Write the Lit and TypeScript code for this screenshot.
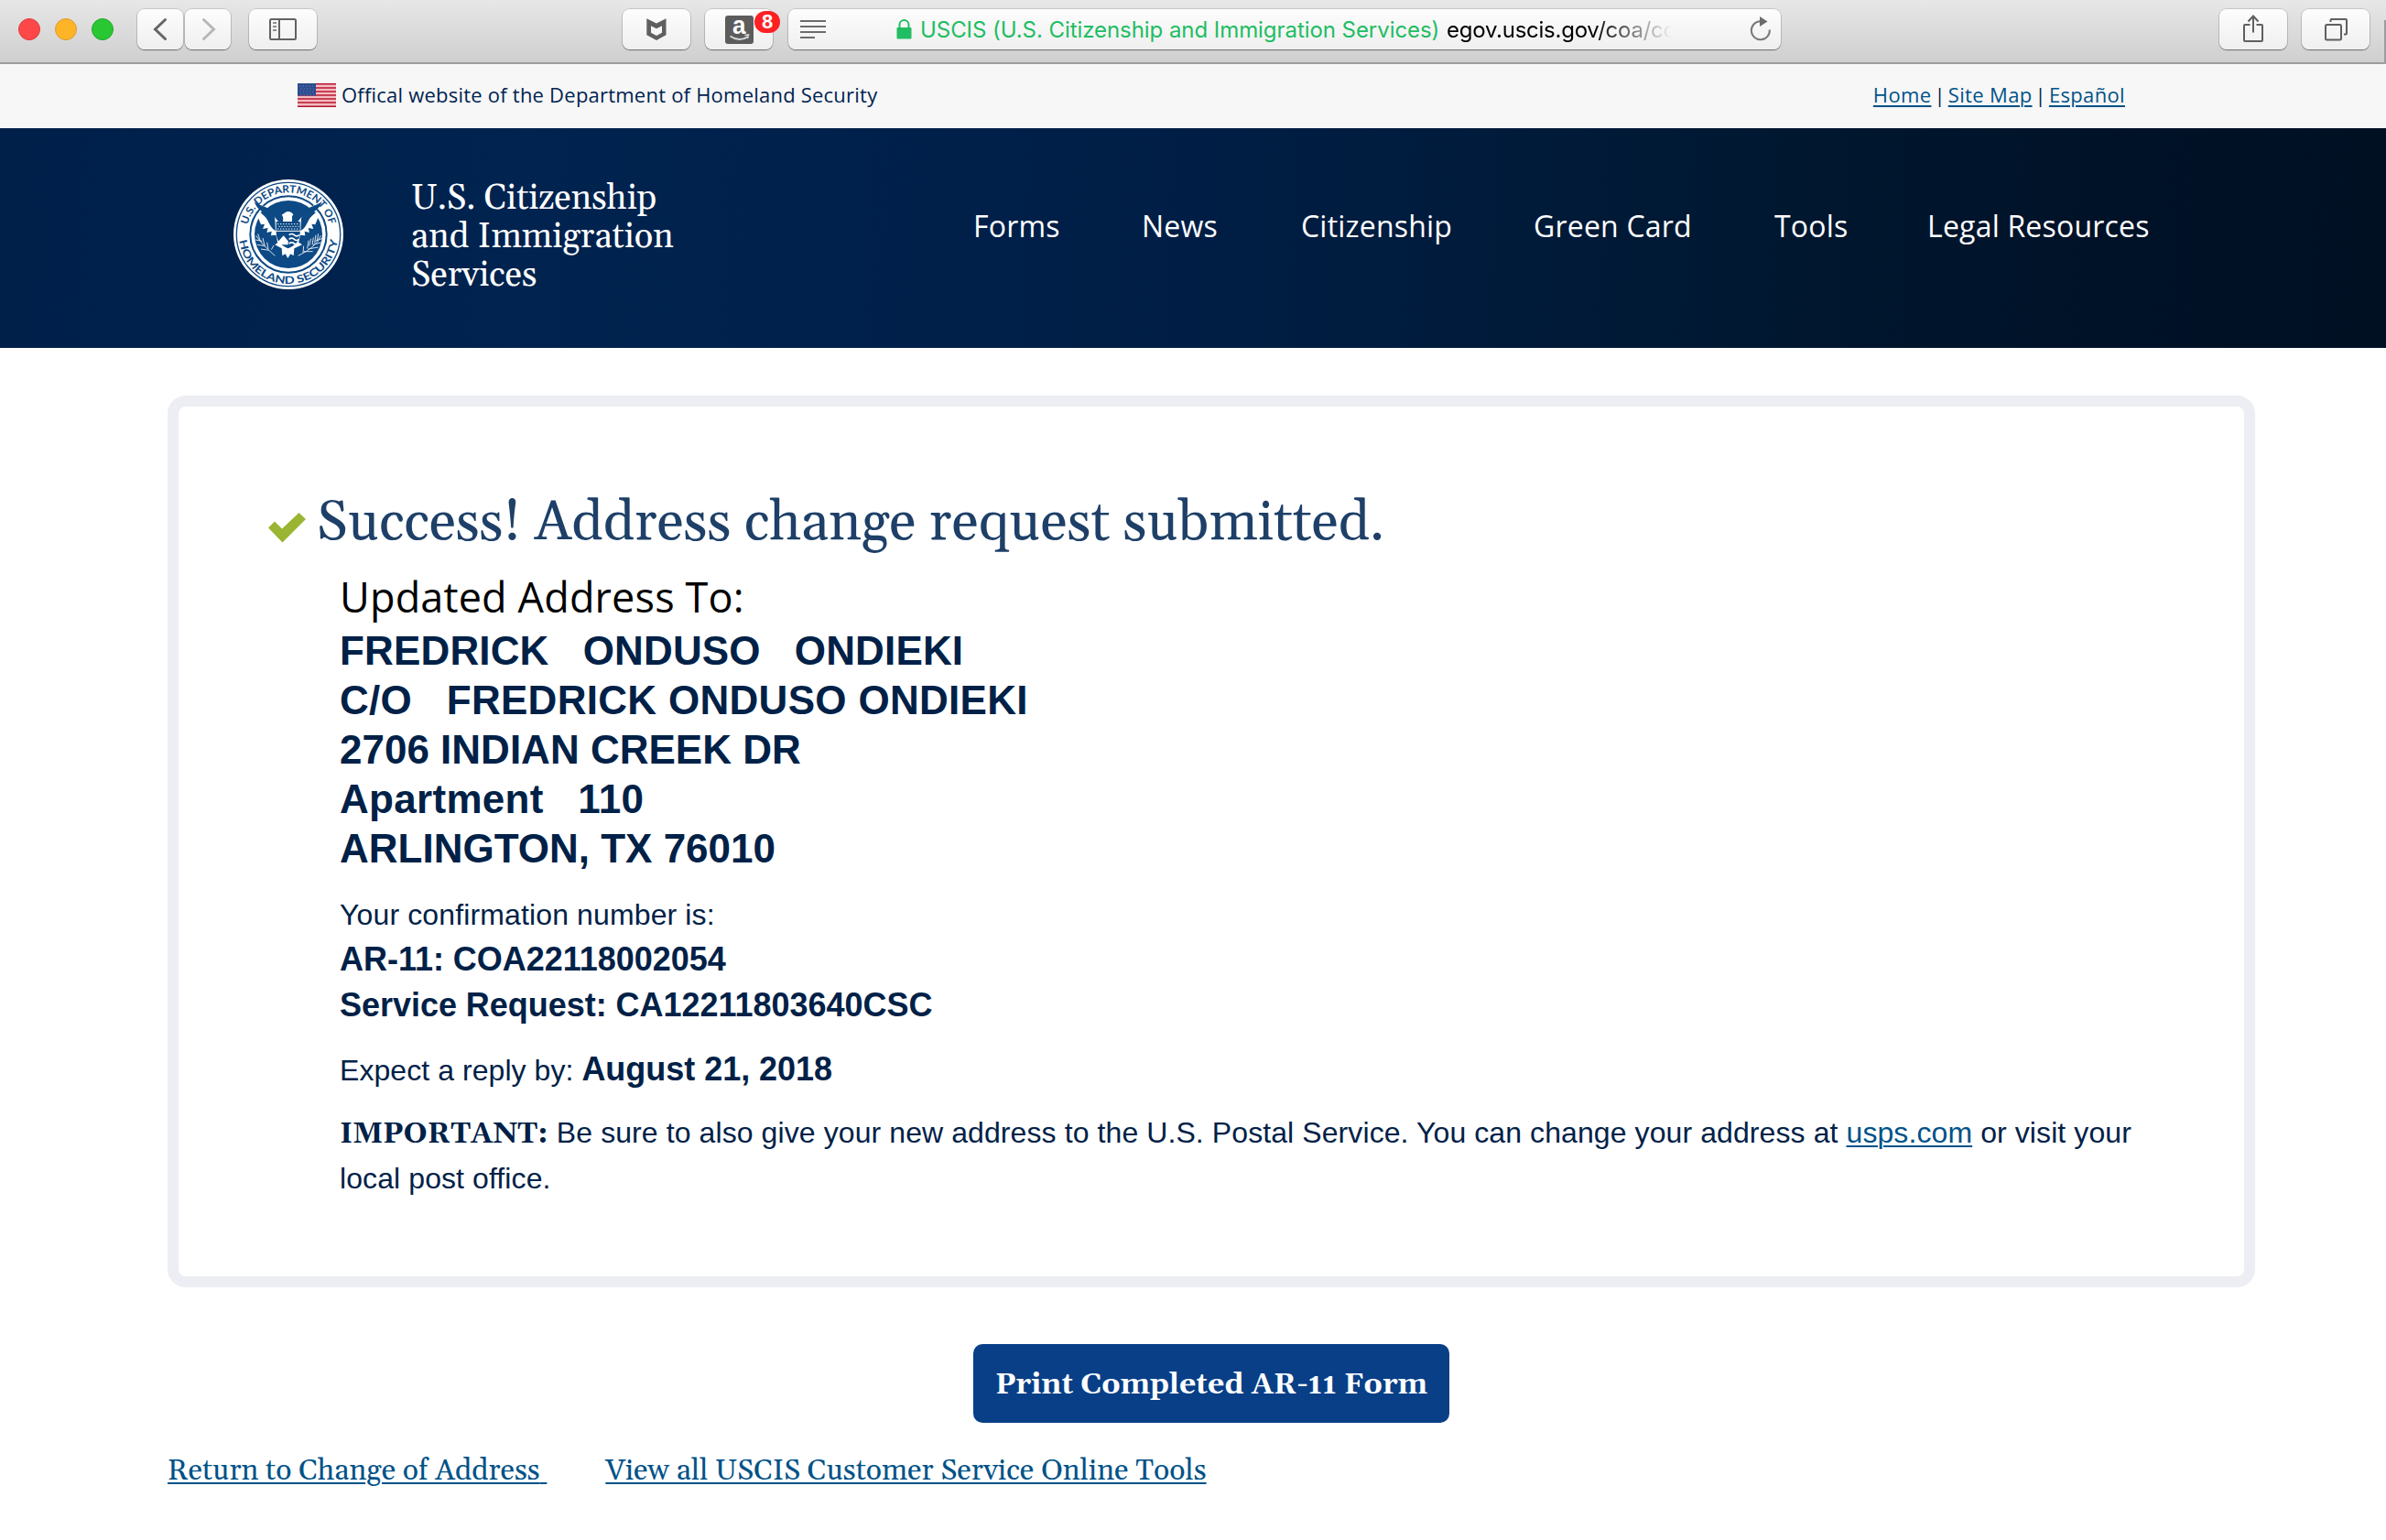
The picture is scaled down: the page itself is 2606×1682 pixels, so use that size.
import { LitElement, html, css, svg } from "lit";
import { customElement } from "lit/decorators.js";

@customElement("browser-toolbar")
class BrowserToolbar extends LitElement {
  static styles = css`
    :host { display: block; }
    .bar {
      position: relative; box-sizing: border-box; display: flex; align-items: flex-start;
      height: 70px; padding: 10px 18px 0 20px;
      background: linear-gradient(#e7e7e7, #cfcfcf); border-bottom: 2px solid #9d9d9d;
    }
    .lights { display: flex; gap: 16px; padding-top: 10px; margin-right: 26px; }
    .light { box-sizing: border-box; width: 24px; height: 24px; border-radius: 50%; border: 1px solid #e0393b; background: #fd484a; }
    .light.min { background: #fdb426; border-color: #dd9a2b; }
    .light.max { background: #29c732; border-color: #20a82b; }
    .btn {
      position: relative; display: flex; align-items: center; justify-content: center;
      height: 44px; border-radius: 8px; background: linear-gradient(#fdfdfd, #f6f6f6 50%, #efefef);
      box-shadow: 0 0 0 1px rgba(0, 0, 0, 0.13), 0 1px 1px rgba(0, 0, 0, 0.4);
    }
    .btn svg { display: block; }
    .nav { width: 50px; margin-right: 2px; }
    .side { width: 74px; margin: 0 334px 0 18px; }
    .ext { width: 74px; margin-right: 16px; }
    .url {
      flex: none; box-sizing: border-box; width: 1084px; margin-left: 1px; justify-content: flex-start; padding-left: 13px;
      font: 24px/44px Inter, "Liberation Sans", sans-serif; white-space: pre;
    }
    .lock { margin: 0 9px 0 77px; }
    .org { color: #21bd63; letter-spacing: -0.06px; width: 575px; padding-top: 2px; }
    .host {
      width: 255px; letter-spacing: -0.25px; color: transparent; padding-top: 2px;
      background: linear-gradient(90deg, #000 0, #000 160px, rgba(0, 0, 0, 0) 246px); -webkit-background-clip: text; background-clip: text;
    }
    .reload { margin-left: auto; padding-right: 9px; }
    .end { width: 74px; margin-left: 16px; }
    .end.first { margin-left: auto; }
    .badge {
      position: absolute; left: 54px; top: 2px; width: 28px; height: 24px; border-radius: 12px;
      background: #fd2024; color: #fff; font: bold 22px/24px "Liberation Sans", sans-serif; text-align: center;
    }
    .edge { position: absolute; right: 0; top: 22px; width: 2px; height: 48px; background: #9d9d9d; }
    .aa { font: bold 27px "Liberation Sans", sans-serif; }
  `;
  render() {
    return html`<div class="bar">
      <div class="lights"><div class="light"></div><div class="light min"></div><div class="light max"></div></div>
      <div class="btn nav"><svg width="50" height="44" fill="none" stroke="#656565" stroke-width="3" stroke-linecap="round"><path d="M30.5 11.5 19.5 22l11 10.5"/></svg></div>
      <div class="btn nav"><svg width="50" height="44" fill="none" stroke="#b7b7b7" stroke-width="3" stroke-linecap="round"><path d="M20.5 11.5 31.500 22l-11 10.500"/></svg></div>
      <div class="btn side"><svg width="74" height="44" fill="none" stroke="#626262" stroke-width="2"><rect x="23" y="11" width="28" height="22" rx="1.500"/><path d="M33 11v22"/><path stroke="#8f8f8f" d="M26 15h4M26 19h4M26 23h4"/></svg></div>
      <div class="btn ext"><svg width="74" height="44"><path fill="#5f5f5f" fill-rule="evenodd" d="M26.300 10.200 37 15.500l10.500-5.300v18L37 34l-10.700-5.800ZM31 18.300v7.500l6 3.200 6-3.200v-7.500l-6 3Z"/></svg></div>
      <div class="btn ext">
        <svg width="74" height="44"><rect x="22" y="7" width="31" height="31" rx="3" fill="#5c5c5c"/><text class="aa" x="30" y="27" fill="#fff" textLength="14.500" lengthAdjust="spacingAndGlyphs">a</text><path d="M27.500 29.500q9.500 6.500 19 .8" fill="none" stroke="#d8d8d8" stroke-width="2"/><path d="M43.500 28.500l4-.5-1 4" fill="none" stroke="#d8d8d8" stroke-width="1.500"/></svg>
        <span class="badge">8</span>
      </div>
      <div class="btn url">
        <svg width="28" height="44" stroke="#6c6c6c" stroke-width="2"><path d="M0 13h28M0 19h28M0 25h28M0 31h16"/></svg>
        <svg class="lock" width="17" height="44"><rect x="0.500" y="20" width="16" height="12.500" rx="1" fill="#21bd63"/><path d="M3.500 21v-4a5 5 0 0 1 10 0v4" fill="none" stroke="#21bd63" stroke-width="2"/></svg>
        <span class="org">USCIS (U.S. Citizenship and Immigration Services)</span><span class="host">egov.uscis.gov/coa/co</span>
        <svg class="reload" width="26" height="44"><path d="M12.500 13.300A10 10 0 1 0 22.800 22.500" fill="none" stroke="#7a7a7a" stroke-width="2"/><path d="M12 8l8.500 5.500-8.500 5.500z" fill="#6c6c6c"/></svg>
      </div>
      <div class="btn end first"><svg width="74" height="44" fill="none" stroke="#5f5f5f" stroke-width="2"><path d="M33.500 17H28q-1 0-1 1v16q0 1 1 1h18q1 0 1-1V18q0-1-1-1h-5.500M37 25.500V8M31.500 13.500 37 7.500l5.500 6"/></svg></div>
      <div class="btn end"><svg width="74" height="44" fill="none" stroke="#5f5f5f" stroke-width="2"><rect x="26" y="17" width="17" height="16.500" rx="1.500"/><path d="M31.500 14v-2q0-1 1-1H48q1 0 1 1v14.500q0 1-1 1h-2"/></svg></div>
      <div class="edge"></div>
    </div>`;
  }
}

@customElement("agency-seal")
class AgencySeal extends LitElement {
  static styles = css`
    :host { display: block; width: 120px; height: 120px; }
    .seal { display: block; }
    .ring { font: bold 34px Lato, "Liberation Sans", sans-serif; fill: #0d4984; }
  `;
  render() {
    const wing = svg`
      <path fill="#fff" d="M122 166l12 30 12-2-6 16 17-3-4 15 16-4-2 14 16-2 6 26 30-10 4-40-30-18-20-24-34-32Z"/>
      <path fill="#0d4984" d="M112 120c16 14 40 16 56 30 14 14 12 30 14 66-12-6-18-18-26-34-8-14-18-20-24-26l6-2c-12-8-22-20-26-34Z"/>`;
    return html`<svg class="seal" width="120" height="120" viewBox="44 48 360 360">
      <defs>
        <path id="top" d="M87 228a137 137 0 0 1 274 0"/>
        <path id="bottom" d="M62 228a162 162 0 0 0 324 0"/>
      </defs>
      <circle cx="224" cy="228" r="180" fill="#fff"/>
      <circle cx="224" cy="228" r="170" fill="none" stroke="#0d4984" stroke-width="4"/>
      <circle cx="224" cy="228" r="125" fill="none" stroke="#0d4984" stroke-width="6"/>
      <circle cx="224" cy="228" r="111" fill="#0d4984"/>
      <text class="ring" textLength="366" lengthAdjust="spacingAndGlyphs"><textPath href="#top" startOffset="32" textLength="366" lengthAdjust="spacingAndGlyphs">U.S. DEPARTMENT OF</textPath></text>
      <text class="ring" textLength="470" lengthAdjust="spacingAndGlyphs"><textPath href="#bottom" startOffset="20" textLength="470" lengthAdjust="spacingAndGlyphs">HOMELAND SECURITY</textPath></text>
      ${wing}
      <g transform="matrix(-1 0 0 1 446 0)">${wing}</g>
      <path fill="#fff" d="M206 186c2-14 0-18-4-22l12-8c8-6 22-2 26 8l-4 4v18Z"/>
      <path fill="#fff" d="M180 262l22 12 2 24 10-6 8 14 9-14 10 6 2-24 26-12-14-10h-62Z"/>
      <path fill="#0d4984" d="M184 186h78v34c0 28-14 44-39 54-25-10-39-26-39-54Z"/>
      <path stroke="#fff" stroke-width="3" stroke-dasharray="4 5" d="M188 194h70M192 202h66M188 210h70"/>
      <path stroke="#fff" stroke-width="3" d="M184 217h78" />
      <path fill="#fff" d="M188 254l20-22 15 18v12h-28Z"/>
      <path fill="none" stroke="#fff" stroke-width="5" d="M226 230q9-7 17 0t17 0M226 244q9-7 17 0t15 0M226 258q9-7 17 0t8 0"/>
      <path fill="none" stroke="#d5e1ec" stroke-width="3" d="M118 232q18 28 62 66M116 246l22 4M122 262l26 4M134 276l26 4M124 226l8 24M140 240l6 24M154 254l4 22M168 278l8-14M330 232q-14 38-74 66M338 240l-26 10M334 254l-30 8M322 270l-34 6M304 284l-30 0M322 226l-4 22M306 238l-4 24M290 248l-4 26M274 266l-2 22M314 230l-4 26M298 242l-6 24"/>
    </svg>`;
  }
}

@customElement("site-header")
class SiteHeader extends LitElement {
  static styles = css`
    :host { display: block; }
    .top {
      display: flex; align-items: center; box-sizing: border-box; height: 70px; padding: 0 285px 0 325px; background: #f7f7f7;
      font: 22px/67px "Open Sans", Lato, sans-serif; letter-spacing: 0.22px; color: #002350; white-space: pre;
    }
    .top > span { height: 70px; }
    .flag { display: block; margin: -2px 6px 0 0; }
    .links { margin-left: auto; display: flex; gap: 3px; }
    a { color: #005288; text-decoration: underline; text-decoration-thickness: 1.5px; text-underline-offset: 3px; }
    .links a { letter-spacing: 0.35px; }
    .head {
      display: flex; box-sizing: border-box; height: 240px; padding: 0 0 0 255px; color: #fff;
      background: linear-gradient(93deg, #00204a 0, #00234f 22%, #00204a 40%, #001e45 50%, #001b3b 62%, #00172f 76%, #001228 88%, #001023 100%);
    }
    agency-seal { margin-top: 56px; }
    .name { width: 614px; margin: 56px 0 0 74px; font: 38px/42px Gelasio, Georgia, "Liberation Serif", serif; }
    .menu {
      display: grid; grid-template-columns: 184px 174px 254px 263px 167px auto; margin-top: 82px; height: 50px;
      font: 32px/50px "Open Sans", Lato, sans-serif; letter-spacing: 0.2px; white-space: pre;
    }
  `;
  render() {
    return html`
      <div class="top">
        <svg class="flag" width="42" height="26" viewBox="0 0 42 26">
          <rect width="42" height="26" fill="#f3bcc3"/>
          <path stroke="#c93f52" stroke-width="2" d="M0 5h42M0 9h42M0 13h42M0 17h42M0 21h42"/>
          <path stroke="#b3122d" stroke-width="1.500" d="M0 .7h42M0 25.300h42"/>
          <rect width="20" height="13.500" fill="#2b4c8d"/>
          <path stroke="#4d68a8" stroke-width="1.500" stroke-dasharray="1.500 2" d="M2 3h16M3 6h15M2 9h16M3 12h15"/>
        </svg>
        <span>Offical website of the Department of Homeland Security</span>
        <span class="links"><a>Home</a><span>|</span><a>Site Map</a><span>|</span><a>Español</a></span>
      </div>
      <div class="head">
        <agency-seal></agency-seal>
        <div class="name">U.S. Citizenship<br>and Immigration<br>Services</div>
        <nav class="menu">${["Forms", "News", "Citizenship", "Green Card", "Tools", "Legal Resources"].map((t) => html`<span>${t}</span>`)}</nav>
      </div>`;
  }
}

@customElement("app-root")
class AppRoot extends LitElement {
  static styles = css`
    :host { display: block; height: 1682px; overflow: hidden; background: #fff; color: #002147; }
    .main { padding: 52px 143px 0 183px; }
    .card {
      box-sizing: border-box; height: 974px; padding: 90px 90px 0 98px;
      border: 12px solid #edeef3; border-radius: 20px;
      font: 32px/50px "Liberation Sans", Arial, sans-serif;
    }
    .title { display: flex; margin: 0; font: 60px/76px Gelasio, Georgia, "Liberation Serif", serif; color: #1e4068; white-space: pre; }
    .tick { display: block; margin: 25px 12px 0 0; }
    .body { padding-left: 78px; }
    .sub { margin: 12px 0 2px; font: 45px/60px "Open Sans", Lato, sans-serif; letter-spacing: 0.15px; color: #000; }
    .addr { font-weight: bold; font-size: 44px; line-height: 54px; letter-spacing: 0.15px; white-space: pre; }
    .addr.tight { letter-spacing: 0; }
    .addr.loose { letter-spacing: 0.3px; }
    .para { margin-top: 20px; }
    .note { margin-top: 18px; letter-spacing: 0.09px; }
    .first { letter-spacing: 0.13px; }
    .expect { letter-spacing: 0.06px; }
    .big { font-weight: bold; font-size: 36px; line-height: 36px; letter-spacing: -0.03px; }
    .imp { font: bold 32px/32px Gelasio, Georgia, "Liberation Serif", serif; letter-spacing: 0; }
    a { color: #005288; text-decoration: underline; text-decoration-thickness: 2px; text-underline-offset: 3px; }
    .print {
      display: block; box-sizing: border-box; width: 520px; height: 86px; margin: 62px auto 0; padding: 3px 0 0; border: 0; border-radius: 10px;
      background: #083f87; color: #fff; font: bold 32px/83px Gelasio, Georgia, "Liberation Serif", serif;
    }
    .more { display: flex; gap: 64px; margin-top: 28px; font: 32px/50px Gelasio, Georgia, "Liberation Serif", serif; white-space: pre; }
  `;
  render() {
    const n = "\u00a0";
    const addr: [string, string][] = [
      [`FREDRICK${n}${n} ONDUSO${n}${n} ONDIEKI`, ""],
      [`C/O${n}${n} FREDRICK ONDUSO ONDIEKI`, "loose"],
      ["2706 INDIAN CREEK DR", "tight"],
      [`Apartment${n}${n} 110`, "loose"],
      ["ARLINGTON, TX 76010", "tight"],
    ];
    return html`
      <browser-toolbar></browser-toolbar>
      <site-header></site-header>
      <div class="main">
        <div class="card">
          <h1 class="title"><svg class="tick" width="41" height="34" viewBox="0 0 41 34"><path fill="#9ab532" d="M0 17.500 7 10.500 15 18.500 33.500 1 41 8 15.500 33.500Z"/></svg>Success! Address change request submitted.</h1>
          <div class="body">
            <div class="sub">Updated Address To:</div>
            ${addr.map(([t, c]) => html`<div class="addr ${c}">${t}</div>`)}
            <div class="para first">Your confirmation number is:</div>
            <div><span class="big">AR-11: COA22118002054</span></div>
            <div><span class="big">Service Request: CA12211803640CSC</span></div>
            <div class="para expect">Expect a reply by: <span class="big">August 21, 2018</span></div>
            <div class="note"><span class="imp">IMPORTANT:</span> Be sure to also give your new address to the U.S. Postal Service. You can change your address at <a>usps.com</a> or visit your<br>local post office.</div>
          </div>
        </div>
        <button class="print">Print Completed AR-11 Form</button>
        <div class="more"><a>Return to Change of Address${n}</a><a>View all USCIS Customer Service Online Tools</a></div>
      </div>`;
  }
}
